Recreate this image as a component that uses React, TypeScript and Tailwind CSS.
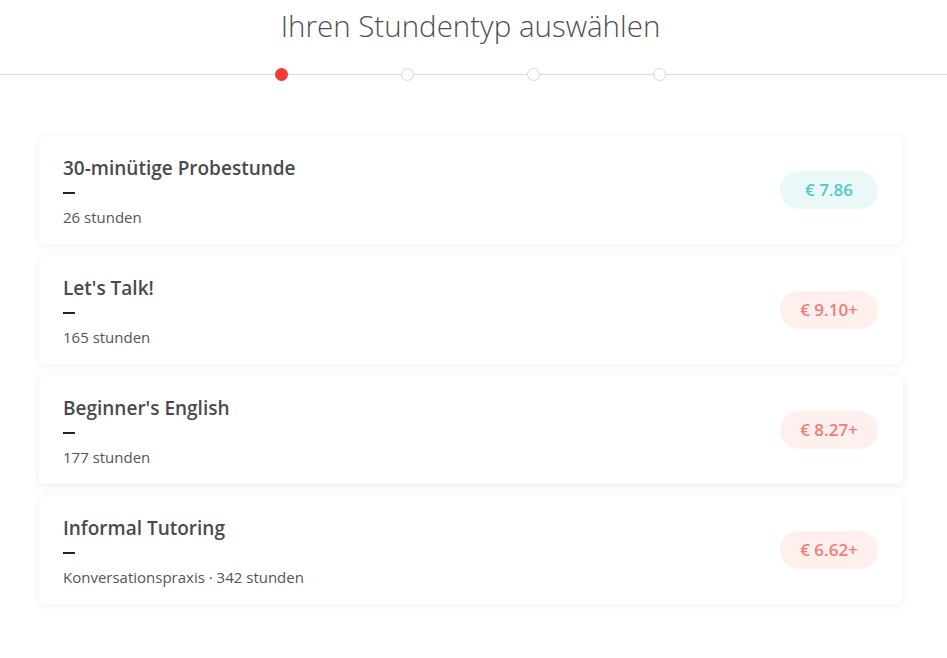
import React from "react";

type Lesson = {
  title: string;
  sub: string;
  price: string;
  tone: "teal" | "red";
};

const lessons: Lesson[] = [
  { title: "30-minütige Probestunde", sub: "26 stunden", price: "€ 7.86", tone: "teal" },
  { title: "Let's Talk!", sub: "165 stunden", price: "€ 9.10+", tone: "red" },
  { title: "Beginner's English", sub: "177 stunden", price: "€ 8.27+", tone: "red" },
  { title: "Informal Tutoring", sub: "Konversationspraxis · 342 stunden", price: "€ 6.62+", tone: "red" },
];

function Stepper() {
  return (
    <div className="relative h-[14px] mt-[22px]">
      <div className="absolute left-0 right-0 top-[6px] h-px bg-[#dcdcdc]" />
      <div className="relative flex items-center pl-[275px] gap-[113px]">
        <span className="w-[13px] h-[13px] rounded-full bg-[#f23b36]" />
        <span className="w-[13px] h-[13px] rounded-full bg-white border border-[#d9d9d9]" />
        <span className="w-[13px] h-[13px] rounded-full bg-white border border-[#d9d9d9]" />
        <span className="w-[13px] h-[13px] rounded-full bg-white border border-[#d9d9d9]" />
      </div>
    </div>
  );
}

function LessonCard({ lesson, raised }: { lesson: Lesson; raised?: boolean }) {
  const pill =
    lesson.tone === "teal"
      ? "bg-[#ebf8f8] text-[#4dcbca]"
      : "bg-[#fff0ee] text-[#f27c78]";
  return (
    <div
      className={
        "h-[108px] rounded-[6px] bg-white flex items-center justify-between pl-[24px] pr-[25px] " +
        (raised
          ? "shadow-[0_2px_10px_rgba(40,40,90,0.09)]"
          : "shadow-[0_1px_8px_rgba(40,40,90,0.06)]")
      }
    >
      <div className="flex flex-col pt-[2px]">
        <div className="text-[19px] leading-[24px] font-semibold text-[#4a4a4a]">{lesson.title}</div>
        <div className="mt-[12px] w-[12px] h-[2px] bg-[#222]" />
        <div className="mt-[14px] text-[15px] leading-[18px] text-[#555]">{lesson.sub}</div>
      </div>
      <div
        className={
          "w-[98px] h-[38px] rounded-full flex items-center justify-center text-[17px] font-semibold " +
          pill
        }
      >
        {lesson.price}
      </div>
    </div>
  );
}

export default function App() {
  return (
    <div
      className="w-[947px] h-[658px] bg-white overflow-hidden"
      style={{ fontFamily: '"Open Sans", "Noto Sans", sans-serif' }}
    >
      <h1 className="pt-[6px] text-center text-[29.5px] leading-[40px] font-light text-[#4f4f4f] pr-[6px]">
        Ihren Stundentyp auswählen
      </h1>
      <Stepper />
      <div className="mx-[39px] w-[864px] mt-[54px] flex flex-col gap-[12px]">
        {lessons.map((l, i) => (
          <LessonCard key={l.title} lesson={l} raised={i === 2} />
        ))}
      </div>
    </div>
  );
}
